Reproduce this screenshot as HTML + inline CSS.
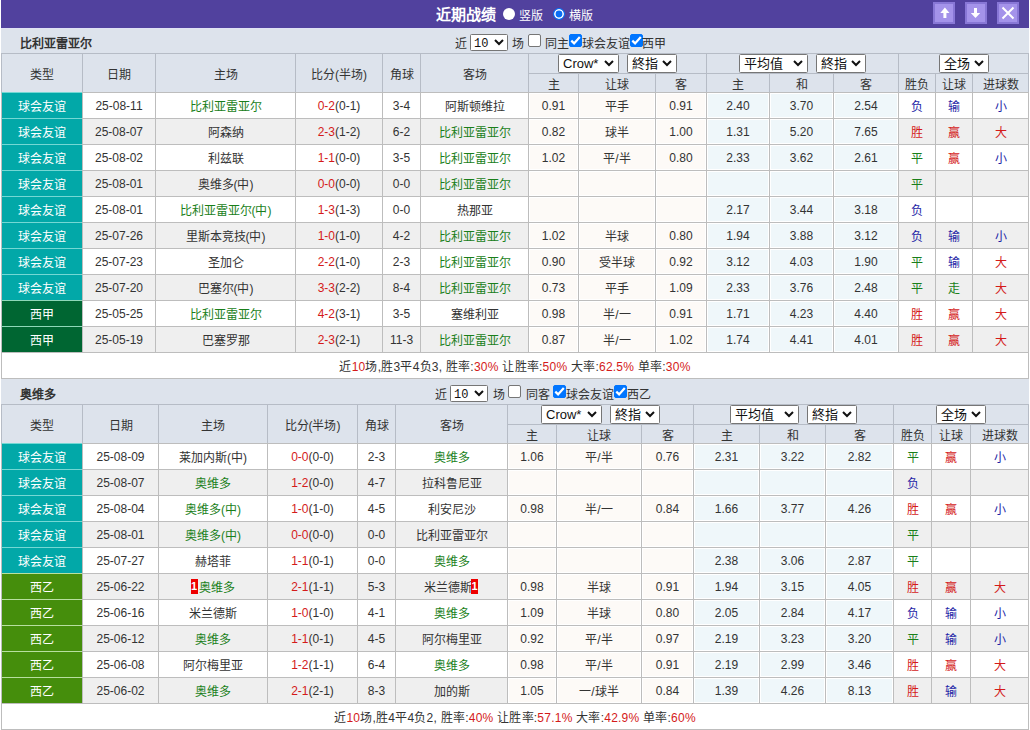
<!DOCTYPE html>
<html lang="zh-CN"><head><meta charset="utf-8"><title>近期战绩</title><style>
*{box-sizing:border-box}
html,body{margin:0;padding:0}
body{width:1030px;height:730px;overflow:hidden;background:#fff;position:relative;font-family:"Liberation Sans",sans-serif;font-size:12px;color:#333}
.c{position:absolute;border:1px solid #bdbdbd;text-align:center;white-space:nowrap;overflow:hidden}
.ty{color:#fff;font-size:12px}
.title{position:absolute;left:1px;top:0;width:1028px;height:28px;background:#51419e}
.bar{position:absolute;left:1px;width:1028px;background:#dde3ec}
.tn{position:absolute;left:19px;top:6px;font-size:12px;color:#333}
.ct{position:absolute;white-space:nowrap;font-size:12px;line-height:16px}
.sm{justify-content:flex-start;padding:0 0 0 5px}
.sm .chev{position:absolute;left:23px;top:4px}
.sm .st{position:relative;top:1px;left:-2px}
.sel{display:inline-flex;align-items:center;justify-content:space-between;vertical-align:middle;background:#fff;border:1px solid #767676;border-radius:1.5px;padding:0 4px 0 4px;color:#111;line-height:1}
.chev{flex:none}
.cb{display:inline-block;width:13px;height:13px;border:1px solid #767676;border-radius:2px;background:#fff;vertical-align:middle;position:relative}
.cb.on{background:#0075ff;border-color:#0075ff}
.cb svg{position:absolute;left:-1px;top:-1px}
.rc{display:inline-block;position:relative;top:-2px;left:-1px;background:#e00;color:#fff;font-weight:bold;font-size:11px;width:7px;height:15px;line-height:15px;text-align:center;vertical-align:middle;overflow:hidden}
.btn{position:absolute;top:2px;width:22px;height:22px;background:#a493ea;border:2px solid #8877d6}
</style></head>
<body>
<div class="title">
<b style="position:absolute;left:435px;top:3px;font-size:15px;color:#fff">近期战绩</b>
<span style="position:absolute;left:502px;top:8px;width:12px;height:12px;border-radius:50%;background:#fff"></span>
<span style="position:absolute;left:518px;top:6px;font-size:12px;color:#fff">竖版</span>
<span style="position:absolute;left:552px;top:8px;width:12px;height:12px;border-radius:50%;background:#0a6ff5;border:1.5px solid #0a6ff5;box-shadow:inset 0 0 0 1.6px #fff"></span>
<span style="position:absolute;left:568px;top:6px;font-size:12px;color:#fff">横版</span>
<span class="btn" style="left:932px"><svg width="18" height="18" viewBox="0 0 18 18" style="position:absolute;left:0;top:0"><path d="M9.9 3.6 L14.5 9.1 L11.4 9.1 L11.4 14 L8.4 14 L8.4 9.1 L5.3 9.1 Z" fill="#fff"/></svg></span>
<span class="btn" style="left:964px"><svg width="18" height="18" viewBox="0 0 18 18" style="position:absolute;left:0;top:0"><path d="M8.5 14 L13.2 9.1 L10 9.1 L10 3.9 L7 3.9 L7 9.1 L3.8 9.1 Z" fill="#fff"/></svg></span>
<span class="btn" style="left:996px"><svg width="18" height="18" viewBox="0 0 18 18" style="position:absolute;left:0;top:0"><path d="M3.5 3.5 L14.5 14.5 M14.5 3.5 L3.5 14.5" stroke="#fff" stroke-width="2"/></svg></span>
</div>
<div class="bar" style="top:28px;height:25px;border-top:1px solid #e0e2f5"><b class="tn" style="top:5px">比利亚雷亚尔</b></div><span class="ct" style="left:455px;top:36px">近</span><span class="sel sm" style="position:absolute;left:470px;top:34px;width:38px;height:17px"><span class="st" style="font-family:'Liberation Mono',monospace;font-size:12px;margin-left:1px">10</span><svg class="chev" width="10" height="7" viewBox="0 0 10 7"><polyline points="1,1 5,5 9,1" fill="none" stroke="#111" stroke-width="2"/></svg></span><span class="ct" style="left:512px;top:36px">场</span><span class="cb" style="position:absolute;left:528px;top:34px"></span><span class="ct" style="left:545px;top:36px">同主</span><span class="cb on" style="position:absolute;left:569px;top:34px"><svg width="13" height="13" viewBox="0 0 13 13"><polyline points="2.3,6.6 5.1,9.4 10.8,3" fill="none" stroke="#fff" stroke-width="2.2"/></svg></span><span class="ct" style="left:582px;top:36px">球会友谊</span><span class="cb on" style="position:absolute;left:630px;top:34px"><svg width="13" height="13" viewBox="0 0 13 13"><polyline points="2.3,6.6 5.1,9.4 10.8,3" fill="none" stroke="#fff" stroke-width="2.2"/></svg></span><span class="ct" style="left:642px;top:36px">西甲</span><div class="c" style="left:1px;top:53px;width:82px;height:40px;line-height:38px;padding-top:2px;background:#dde3ec;border-color:#b6bcc6;">类型</div><div class="c" style="left:82px;top:53px;width:74px;height:40px;line-height:38px;padding-top:2px;background:#dde3ec;border-color:#b6bcc6;">日期</div><div class="c" style="left:155px;top:53px;width:141px;height:40px;line-height:38px;padding-top:2px;background:#dde3ec;border-color:#b6bcc6;">主场</div><div class="c" style="left:295px;top:53px;width:88px;height:40px;line-height:38px;padding-top:2px;background:#dde3ec;border-color:#b6bcc6;">比分(半场)</div><div class="c" style="left:382px;top:53px;width:39px;height:40px;line-height:38px;padding-top:2px;background:#dde3ec;border-color:#b6bcc6;">角球</div><div class="c" style="left:420px;top:53px;width:109px;height:40px;line-height:38px;padding-top:2px;background:#dde3ec;border-color:#b6bcc6;">客场</div><div class="c" style="left:528px;top:53px;width:179px;height:21px;line-height:19px;padding-top:0px;background:#dde3ec;border-color:#b6bcc6;"><span class="sel" style="width:61px;height:19px;font-size:13px"><span class="st">Crow*</span><svg class="chev" width="10" height="7" viewBox="0 0 10 7"><polyline points="1,1 5,5 9,1" fill="none" stroke="#111" stroke-width="2"/></svg></span><span style="display:inline-block;width:8px"></span><span class="sel" style="width:50px;height:19px;font-size:13px"><span class="st">終指</span><svg class="chev" width="10" height="7" viewBox="0 0 10 7"><polyline points="1,1 5,5 9,1" fill="none" stroke="#111" stroke-width="2"/></svg></span></div><div class="c" style="left:706px;top:53px;width:193px;height:21px;line-height:19px;padding-top:0px;background:#dde3ec;border-color:#b6bcc6;"><span class="sel" style="width:69px;height:19px;font-size:13px"><span class="st">平均值</span><svg class="chev" width="10" height="7" viewBox="0 0 10 7"><polyline points="1,1 5,5 9,1" fill="none" stroke="#111" stroke-width="2"/></svg></span><span style="display:inline-block;width:8px"></span><span class="sel" style="width:50px;height:19px;font-size:13px"><span class="st">終指</span><svg class="chev" width="10" height="7" viewBox="0 0 10 7"><polyline points="1,1 5,5 9,1" fill="none" stroke="#111" stroke-width="2"/></svg></span></div><div class="c" style="left:898px;top:53px;width:131px;height:21px;line-height:19px;padding-top:0px;background:#dde3ec;border-color:#b6bcc6;"><span class="sel" style="width:50px;height:19px;font-size:13px"><span class="st">全场</span><svg class="chev" width="10" height="7" viewBox="0 0 10 7"><polyline points="1,1 5,5 9,1" fill="none" stroke="#111" stroke-width="2"/></svg></span></div><div class="c" style="left:528px;top:73px;width:51px;height:20px;line-height:18px;padding-top:2px;background:#dde3ec;border-color:#b6bcc6;">主</div><div class="c" style="left:578px;top:73px;width:78px;height:20px;line-height:18px;padding-top:2px;background:#dde3ec;border-color:#b6bcc6;">让球</div><div class="c" style="left:655px;top:73px;width:52px;height:20px;line-height:18px;padding-top:2px;background:#dde3ec;border-color:#b6bcc6;">客</div><div class="c" style="left:706px;top:73px;width:64px;height:20px;line-height:18px;padding-top:2px;background:#dde3ec;border-color:#b6bcc6;">主</div><div class="c" style="left:769px;top:73px;width:65px;height:20px;line-height:18px;padding-top:2px;background:#dde3ec;border-color:#b6bcc6;">和</div><div class="c" style="left:833px;top:73px;width:66px;height:20px;line-height:18px;padding-top:2px;background:#dde3ec;border-color:#b6bcc6;">客</div><div class="c" style="left:898px;top:73px;width:38px;height:20px;line-height:18px;padding-top:2px;background:#dde3ec;border-color:#b6bcc6;">胜负</div><div class="c" style="left:935px;top:73px;width:38px;height:20px;line-height:18px;padding-top:2px;background:#dde3ec;border-color:#b6bcc6;">让球</div><div class="c" style="left:972px;top:73px;width:57px;height:20px;line-height:18px;padding-top:2px;background:#dde3ec;border-color:#b6bcc6;">进球数</div><div class="c ty" style="left:1px;top:92px;width:82px;height:27px;line-height:25px;padding-top:2px;padding-right:2px;background:#02a8a8;border:0;border-left:1px solid #bdbdbd;border-top:1px solid #74d8d4;border-bottom:1px solid #74d8d4">球会友谊</div><div class="c" style="left:82px;top:92px;width:74px;height:27px;line-height:25px;padding-top:1px;background:#fff;">25-08-11</div><div class="c" style="left:155px;top:92px;width:141px;height:27px;line-height:25px;padding-top:2px;background:#fff;"><span style="color:#1a7f1a">比利亚雷亚尔</span></div><div class="c" style="left:295px;top:92px;width:88px;height:27px;line-height:25px;padding-top:1px;background:#fff;"><span style="color:#d41a1a">0-2</span>(0-1)</div><div class="c" style="left:382px;top:92px;width:39px;height:27px;line-height:25px;padding-top:1px;background:#fff;">3-4</div><div class="c" style="left:420px;top:92px;width:109px;height:27px;line-height:25px;padding-top:2px;background:#fff;"><span style="color:#333">阿斯顿维拉</span></div><div class="c" style="left:528px;top:92px;width:51px;height:27px;line-height:25px;padding-top:1px;background:#fdfaf7;box-shadow:inset 0 0 0 1px #fff;">0.91</div><div class="c" style="left:578px;top:92px;width:78px;height:27px;line-height:25px;padding-top:2px;background:#fdfaf7;box-shadow:inset 0 0 0 1px #fff;">平手</div><div class="c" style="left:655px;top:92px;width:52px;height:27px;line-height:25px;padding-top:1px;background:#fdfaf7;box-shadow:inset 0 0 0 1px #fff;">0.91</div><div class="c" style="left:706px;top:92px;width:64px;height:27px;line-height:25px;padding-top:1px;background:#eff7fa;box-shadow:inset 0 0 0 1px #fff;">2.40</div><div class="c" style="left:769px;top:92px;width:65px;height:27px;line-height:25px;padding-top:1px;background:#eff7fa;box-shadow:inset 0 0 0 1px #fff;">3.70</div><div class="c" style="left:833px;top:92px;width:66px;height:27px;line-height:25px;padding-top:1px;background:#eff7fa;box-shadow:inset 0 0 0 1px #fff;">2.54</div><div class="c" style="left:898px;top:92px;width:38px;height:27px;line-height:25px;padding-top:2px;background:#fff;"><span style="color:#1e1ea6">负</span></div><div class="c" style="left:935px;top:92px;width:38px;height:27px;line-height:25px;padding-top:2px;background:#fff;"><span style="color:#1e1ea6">输</span></div><div class="c" style="left:972px;top:92px;width:57px;height:27px;line-height:25px;padding-top:2px;background:#fff;"><span style="color:#1e1ea6">小</span></div><div class="c ty" style="left:1px;top:118px;width:82px;height:27px;line-height:25px;padding-top:2px;padding-right:2px;background:#02a8a8;border:0;border-left:1px solid #bdbdbd;border-top:1px solid #74d8d4;border-bottom:1px solid #74d8d4">球会友谊</div><div class="c" style="left:82px;top:118px;width:74px;height:27px;line-height:25px;padding-top:1px;background:#efefef;">25-08-07</div><div class="c" style="left:155px;top:118px;width:141px;height:27px;line-height:25px;padding-top:2px;background:#efefef;"><span style="color:#333">阿森纳</span></div><div class="c" style="left:295px;top:118px;width:88px;height:27px;line-height:25px;padding-top:1px;background:#efefef;"><span style="color:#d41a1a">2-3</span>(1-2)</div><div class="c" style="left:382px;top:118px;width:39px;height:27px;line-height:25px;padding-top:1px;background:#efefef;">6-2</div><div class="c" style="left:420px;top:118px;width:109px;height:27px;line-height:25px;padding-top:2px;background:#efefef;"><span style="color:#1a7f1a">比利亚雷亚尔</span></div><div class="c" style="left:528px;top:118px;width:51px;height:27px;line-height:25px;padding-top:1px;background:#fdfaf7;box-shadow:inset 0 0 0 1px #fff;">0.82</div><div class="c" style="left:578px;top:118px;width:78px;height:27px;line-height:25px;padding-top:2px;background:#fdfaf7;box-shadow:inset 0 0 0 1px #fff;">球半</div><div class="c" style="left:655px;top:118px;width:52px;height:27px;line-height:25px;padding-top:1px;background:#fdfaf7;box-shadow:inset 0 0 0 1px #fff;">1.00</div><div class="c" style="left:706px;top:118px;width:64px;height:27px;line-height:25px;padding-top:1px;background:#eff7fa;box-shadow:inset 0 0 0 1px #fff;">1.31</div><div class="c" style="left:769px;top:118px;width:65px;height:27px;line-height:25px;padding-top:1px;background:#eff7fa;box-shadow:inset 0 0 0 1px #fff;">5.20</div><div class="c" style="left:833px;top:118px;width:66px;height:27px;line-height:25px;padding-top:1px;background:#eff7fa;box-shadow:inset 0 0 0 1px #fff;">7.65</div><div class="c" style="left:898px;top:118px;width:38px;height:27px;line-height:25px;padding-top:2px;background:#efefef;"><span style="color:#d41a1a">胜</span></div><div class="c" style="left:935px;top:118px;width:38px;height:27px;line-height:25px;padding-top:2px;background:#efefef;"><span style="color:#d41a1a">赢</span></div><div class="c" style="left:972px;top:118px;width:57px;height:27px;line-height:25px;padding-top:2px;background:#efefef;"><span style="color:#d41a1a">大</span></div><div class="c ty" style="left:1px;top:144px;width:82px;height:27px;line-height:25px;padding-top:2px;padding-right:2px;background:#02a8a8;border:0;border-left:1px solid #bdbdbd;border-top:1px solid #74d8d4;border-bottom:1px solid #74d8d4">球会友谊</div><div class="c" style="left:82px;top:144px;width:74px;height:27px;line-height:25px;padding-top:1px;background:#fff;">25-08-02</div><div class="c" style="left:155px;top:144px;width:141px;height:27px;line-height:25px;padding-top:2px;background:#fff;"><span style="color:#333">利兹联</span></div><div class="c" style="left:295px;top:144px;width:88px;height:27px;line-height:25px;padding-top:1px;background:#fff;"><span style="color:#d41a1a">1-1</span>(0-0)</div><div class="c" style="left:382px;top:144px;width:39px;height:27px;line-height:25px;padding-top:1px;background:#fff;">3-5</div><div class="c" style="left:420px;top:144px;width:109px;height:27px;line-height:25px;padding-top:2px;background:#fff;"><span style="color:#1a7f1a">比利亚雷亚尔</span></div><div class="c" style="left:528px;top:144px;width:51px;height:27px;line-height:25px;padding-top:1px;background:#fdfaf7;box-shadow:inset 0 0 0 1px #fff;">1.02</div><div class="c" style="left:578px;top:144px;width:78px;height:27px;line-height:25px;padding-top:2px;background:#fdfaf7;box-shadow:inset 0 0 0 1px #fff;">平/半</div><div class="c" style="left:655px;top:144px;width:52px;height:27px;line-height:25px;padding-top:1px;background:#fdfaf7;box-shadow:inset 0 0 0 1px #fff;">0.80</div><div class="c" style="left:706px;top:144px;width:64px;height:27px;line-height:25px;padding-top:1px;background:#eff7fa;box-shadow:inset 0 0 0 1px #fff;">2.33</div><div class="c" style="left:769px;top:144px;width:65px;height:27px;line-height:25px;padding-top:1px;background:#eff7fa;box-shadow:inset 0 0 0 1px #fff;">3.62</div><div class="c" style="left:833px;top:144px;width:66px;height:27px;line-height:25px;padding-top:1px;background:#eff7fa;box-shadow:inset 0 0 0 1px #fff;">2.61</div><div class="c" style="left:898px;top:144px;width:38px;height:27px;line-height:25px;padding-top:2px;background:#fff;"><span style="color:#1a7f1a">平</span></div><div class="c" style="left:935px;top:144px;width:38px;height:27px;line-height:25px;padding-top:2px;background:#fff;"><span style="color:#d41a1a">赢</span></div><div class="c" style="left:972px;top:144px;width:57px;height:27px;line-height:25px;padding-top:2px;background:#fff;"><span style="color:#1e1ea6">小</span></div><div class="c ty" style="left:1px;top:170px;width:82px;height:27px;line-height:25px;padding-top:2px;padding-right:2px;background:#02a8a8;border:0;border-left:1px solid #bdbdbd;border-top:1px solid #74d8d4;border-bottom:1px solid #74d8d4">球会友谊</div><div class="c" style="left:82px;top:170px;width:74px;height:27px;line-height:25px;padding-top:1px;background:#efefef;">25-08-01</div><div class="c" style="left:155px;top:170px;width:141px;height:27px;line-height:25px;padding-top:2px;background:#efefef;"><span style="color:#333">奥维多(中)</span></div><div class="c" style="left:295px;top:170px;width:88px;height:27px;line-height:25px;padding-top:1px;background:#efefef;"><span style="color:#d41a1a">0-0</span>(0-0)</div><div class="c" style="left:382px;top:170px;width:39px;height:27px;line-height:25px;padding-top:1px;background:#efefef;">0-0</div><div class="c" style="left:420px;top:170px;width:109px;height:27px;line-height:25px;padding-top:2px;background:#efefef;"><span style="color:#1a7f1a">比利亚雷亚尔</span></div><div class="c" style="left:528px;top:170px;width:51px;height:27px;line-height:25px;padding-top:1px;background:#fdfaf7;box-shadow:inset 0 0 0 1px #fff;"></div><div class="c" style="left:578px;top:170px;width:78px;height:27px;line-height:25px;padding-top:1px;background:#fdfaf7;box-shadow:inset 0 0 0 1px #fff;"></div><div class="c" style="left:655px;top:170px;width:52px;height:27px;line-height:25px;padding-top:1px;background:#fdfaf7;box-shadow:inset 0 0 0 1px #fff;"></div><div class="c" style="left:706px;top:170px;width:64px;height:27px;line-height:25px;padding-top:1px;background:#eff7fa;box-shadow:inset 0 0 0 1px #fff;"></div><div class="c" style="left:769px;top:170px;width:65px;height:27px;line-height:25px;padding-top:1px;background:#eff7fa;box-shadow:inset 0 0 0 1px #fff;"></div><div class="c" style="left:833px;top:170px;width:66px;height:27px;line-height:25px;padding-top:1px;background:#eff7fa;box-shadow:inset 0 0 0 1px #fff;"></div><div class="c" style="left:898px;top:170px;width:38px;height:27px;line-height:25px;padding-top:2px;background:#efefef;"><span style="color:#1a7f1a">平</span></div><div class="c" style="left:935px;top:170px;width:38px;height:27px;line-height:25px;padding-top:1px;background:#efefef;"></div><div class="c" style="left:972px;top:170px;width:57px;height:27px;line-height:25px;padding-top:1px;background:#efefef;"></div><div class="c ty" style="left:1px;top:196px;width:82px;height:27px;line-height:25px;padding-top:2px;padding-right:2px;background:#02a8a8;border:0;border-left:1px solid #bdbdbd;border-top:1px solid #74d8d4;border-bottom:1px solid #74d8d4">球会友谊</div><div class="c" style="left:82px;top:196px;width:74px;height:27px;line-height:25px;padding-top:1px;background:#fff;">25-08-01</div><div class="c" style="left:155px;top:196px;width:141px;height:27px;line-height:25px;padding-top:2px;background:#fff;"><span style="color:#1a7f1a">比利亚雷亚尔(中)</span></div><div class="c" style="left:295px;top:196px;width:88px;height:27px;line-height:25px;padding-top:1px;background:#fff;"><span style="color:#d41a1a">1-3</span>(1-3)</div><div class="c" style="left:382px;top:196px;width:39px;height:27px;line-height:25px;padding-top:1px;background:#fff;">0-0</div><div class="c" style="left:420px;top:196px;width:109px;height:27px;line-height:25px;padding-top:2px;background:#fff;"><span style="color:#333">热那亚</span></div><div class="c" style="left:528px;top:196px;width:51px;height:27px;line-height:25px;padding-top:1px;background:#fdfaf7;box-shadow:inset 0 0 0 1px #fff;"></div><div class="c" style="left:578px;top:196px;width:78px;height:27px;line-height:25px;padding-top:1px;background:#fdfaf7;box-shadow:inset 0 0 0 1px #fff;"></div><div class="c" style="left:655px;top:196px;width:52px;height:27px;line-height:25px;padding-top:1px;background:#fdfaf7;box-shadow:inset 0 0 0 1px #fff;"></div><div class="c" style="left:706px;top:196px;width:64px;height:27px;line-height:25px;padding-top:1px;background:#eff7fa;box-shadow:inset 0 0 0 1px #fff;">2.17</div><div class="c" style="left:769px;top:196px;width:65px;height:27px;line-height:25px;padding-top:1px;background:#eff7fa;box-shadow:inset 0 0 0 1px #fff;">3.44</div><div class="c" style="left:833px;top:196px;width:66px;height:27px;line-height:25px;padding-top:1px;background:#eff7fa;box-shadow:inset 0 0 0 1px #fff;">3.18</div><div class="c" style="left:898px;top:196px;width:38px;height:27px;line-height:25px;padding-top:2px;background:#fff;"><span style="color:#1e1ea6">负</span></div><div class="c" style="left:935px;top:196px;width:38px;height:27px;line-height:25px;padding-top:1px;background:#fff;"></div><div class="c" style="left:972px;top:196px;width:57px;height:27px;line-height:25px;padding-top:1px;background:#fff;"></div><div class="c ty" style="left:1px;top:222px;width:82px;height:27px;line-height:25px;padding-top:2px;padding-right:2px;background:#02a8a8;border:0;border-left:1px solid #bdbdbd;border-top:1px solid #74d8d4;border-bottom:1px solid #74d8d4">球会友谊</div><div class="c" style="left:82px;top:222px;width:74px;height:27px;line-height:25px;padding-top:1px;background:#efefef;">25-07-26</div><div class="c" style="left:155px;top:222px;width:141px;height:27px;line-height:25px;padding-top:2px;background:#efefef;"><span style="color:#333">里斯本竞技(中)</span></div><div class="c" style="left:295px;top:222px;width:88px;height:27px;line-height:25px;padding-top:1px;background:#efefef;"><span style="color:#d41a1a">1-0</span>(1-0)</div><div class="c" style="left:382px;top:222px;width:39px;height:27px;line-height:25px;padding-top:1px;background:#efefef;">4-2</div><div class="c" style="left:420px;top:222px;width:109px;height:27px;line-height:25px;padding-top:2px;background:#efefef;"><span style="color:#1a7f1a">比利亚雷亚尔</span></div><div class="c" style="left:528px;top:222px;width:51px;height:27px;line-height:25px;padding-top:1px;background:#fdfaf7;box-shadow:inset 0 0 0 1px #fff;">1.02</div><div class="c" style="left:578px;top:222px;width:78px;height:27px;line-height:25px;padding-top:2px;background:#fdfaf7;box-shadow:inset 0 0 0 1px #fff;">半球</div><div class="c" style="left:655px;top:222px;width:52px;height:27px;line-height:25px;padding-top:1px;background:#fdfaf7;box-shadow:inset 0 0 0 1px #fff;">0.80</div><div class="c" style="left:706px;top:222px;width:64px;height:27px;line-height:25px;padding-top:1px;background:#eff7fa;box-shadow:inset 0 0 0 1px #fff;">1.94</div><div class="c" style="left:769px;top:222px;width:65px;height:27px;line-height:25px;padding-top:1px;background:#eff7fa;box-shadow:inset 0 0 0 1px #fff;">3.88</div><div class="c" style="left:833px;top:222px;width:66px;height:27px;line-height:25px;padding-top:1px;background:#eff7fa;box-shadow:inset 0 0 0 1px #fff;">3.12</div><div class="c" style="left:898px;top:222px;width:38px;height:27px;line-height:25px;padding-top:2px;background:#efefef;"><span style="color:#1e1ea6">负</span></div><div class="c" style="left:935px;top:222px;width:38px;height:27px;line-height:25px;padding-top:2px;background:#efefef;"><span style="color:#1e1ea6">输</span></div><div class="c" style="left:972px;top:222px;width:57px;height:27px;line-height:25px;padding-top:2px;background:#efefef;"><span style="color:#1e1ea6">小</span></div><div class="c ty" style="left:1px;top:248px;width:82px;height:27px;line-height:25px;padding-top:2px;padding-right:2px;background:#02a8a8;border:0;border-left:1px solid #bdbdbd;border-top:1px solid #74d8d4;border-bottom:1px solid #74d8d4">球会友谊</div><div class="c" style="left:82px;top:248px;width:74px;height:27px;line-height:25px;padding-top:1px;background:#fff;">25-07-23</div><div class="c" style="left:155px;top:248px;width:141px;height:27px;line-height:25px;padding-top:2px;background:#fff;"><span style="color:#333">圣加仑</span></div><div class="c" style="left:295px;top:248px;width:88px;height:27px;line-height:25px;padding-top:1px;background:#fff;"><span style="color:#d41a1a">2-2</span>(1-0)</div><div class="c" style="left:382px;top:248px;width:39px;height:27px;line-height:25px;padding-top:1px;background:#fff;">2-3</div><div class="c" style="left:420px;top:248px;width:109px;height:27px;line-height:25px;padding-top:2px;background:#fff;"><span style="color:#1a7f1a">比利亚雷亚尔</span></div><div class="c" style="left:528px;top:248px;width:51px;height:27px;line-height:25px;padding-top:1px;background:#fdfaf7;box-shadow:inset 0 0 0 1px #fff;">0.90</div><div class="c" style="left:578px;top:248px;width:78px;height:27px;line-height:25px;padding-top:2px;background:#fdfaf7;box-shadow:inset 0 0 0 1px #fff;">受半球</div><div class="c" style="left:655px;top:248px;width:52px;height:27px;line-height:25px;padding-top:1px;background:#fdfaf7;box-shadow:inset 0 0 0 1px #fff;">0.92</div><div class="c" style="left:706px;top:248px;width:64px;height:27px;line-height:25px;padding-top:1px;background:#eff7fa;box-shadow:inset 0 0 0 1px #fff;">3.12</div><div class="c" style="left:769px;top:248px;width:65px;height:27px;line-height:25px;padding-top:1px;background:#eff7fa;box-shadow:inset 0 0 0 1px #fff;">4.03</div><div class="c" style="left:833px;top:248px;width:66px;height:27px;line-height:25px;padding-top:1px;background:#eff7fa;box-shadow:inset 0 0 0 1px #fff;">1.90</div><div class="c" style="left:898px;top:248px;width:38px;height:27px;line-height:25px;padding-top:2px;background:#fff;"><span style="color:#1a7f1a">平</span></div><div class="c" style="left:935px;top:248px;width:38px;height:27px;line-height:25px;padding-top:2px;background:#fff;"><span style="color:#1e1ea6">输</span></div><div class="c" style="left:972px;top:248px;width:57px;height:27px;line-height:25px;padding-top:2px;background:#fff;"><span style="color:#d41a1a">大</span></div><div class="c ty" style="left:1px;top:274px;width:82px;height:27px;line-height:25px;padding-top:2px;padding-right:2px;background:#02a8a8;border:0;border-left:1px solid #bdbdbd;border-top:1px solid #74d8d4;border-bottom:1px solid #74d8d4">球会友谊</div><div class="c" style="left:82px;top:274px;width:74px;height:27px;line-height:25px;padding-top:1px;background:#efefef;">25-07-20</div><div class="c" style="left:155px;top:274px;width:141px;height:27px;line-height:25px;padding-top:2px;background:#efefef;"><span style="color:#333">巴塞尔(中)</span></div><div class="c" style="left:295px;top:274px;width:88px;height:27px;line-height:25px;padding-top:1px;background:#efefef;"><span style="color:#d41a1a">3-3</span>(2-2)</div><div class="c" style="left:382px;top:274px;width:39px;height:27px;line-height:25px;padding-top:1px;background:#efefef;">8-4</div><div class="c" style="left:420px;top:274px;width:109px;height:27px;line-height:25px;padding-top:2px;background:#efefef;"><span style="color:#1a7f1a">比利亚雷亚尔</span></div><div class="c" style="left:528px;top:274px;width:51px;height:27px;line-height:25px;padding-top:1px;background:#fdfaf7;box-shadow:inset 0 0 0 1px #fff;">0.73</div><div class="c" style="left:578px;top:274px;width:78px;height:27px;line-height:25px;padding-top:2px;background:#fdfaf7;box-shadow:inset 0 0 0 1px #fff;">平手</div><div class="c" style="left:655px;top:274px;width:52px;height:27px;line-height:25px;padding-top:1px;background:#fdfaf7;box-shadow:inset 0 0 0 1px #fff;">1.09</div><div class="c" style="left:706px;top:274px;width:64px;height:27px;line-height:25px;padding-top:1px;background:#eff7fa;box-shadow:inset 0 0 0 1px #fff;">2.33</div><div class="c" style="left:769px;top:274px;width:65px;height:27px;line-height:25px;padding-top:1px;background:#eff7fa;box-shadow:inset 0 0 0 1px #fff;">3.76</div><div class="c" style="left:833px;top:274px;width:66px;height:27px;line-height:25px;padding-top:1px;background:#eff7fa;box-shadow:inset 0 0 0 1px #fff;">2.48</div><div class="c" style="left:898px;top:274px;width:38px;height:27px;line-height:25px;padding-top:2px;background:#efefef;"><span style="color:#1a7f1a">平</span></div><div class="c" style="left:935px;top:274px;width:38px;height:27px;line-height:25px;padding-top:2px;background:#efefef;"><span style="color:#1a7f1a">走</span></div><div class="c" style="left:972px;top:274px;width:57px;height:27px;line-height:25px;padding-top:2px;background:#efefef;"><span style="color:#d41a1a">大</span></div><div class="c ty" style="left:1px;top:300px;width:82px;height:27px;line-height:25px;padding-top:2px;padding-right:2px;background:#006632;border:0;border-left:1px solid #bdbdbd;border-top:1px solid #8fd8b8;border-bottom:1px solid #8fd8b8">西甲</div><div class="c" style="left:82px;top:300px;width:74px;height:27px;line-height:25px;padding-top:1px;background:#fff;">25-05-25</div><div class="c" style="left:155px;top:300px;width:141px;height:27px;line-height:25px;padding-top:2px;background:#fff;"><span style="color:#1a7f1a">比利亚雷亚尔</span></div><div class="c" style="left:295px;top:300px;width:88px;height:27px;line-height:25px;padding-top:1px;background:#fff;"><span style="color:#d41a1a">4-2</span>(3-1)</div><div class="c" style="left:382px;top:300px;width:39px;height:27px;line-height:25px;padding-top:1px;background:#fff;">3-5</div><div class="c" style="left:420px;top:300px;width:109px;height:27px;line-height:25px;padding-top:2px;background:#fff;"><span style="color:#333">塞维利亚</span></div><div class="c" style="left:528px;top:300px;width:51px;height:27px;line-height:25px;padding-top:1px;background:#fdfaf7;box-shadow:inset 0 0 0 1px #fff;">0.98</div><div class="c" style="left:578px;top:300px;width:78px;height:27px;line-height:25px;padding-top:2px;background:#fdfaf7;box-shadow:inset 0 0 0 1px #fff;">半/一</div><div class="c" style="left:655px;top:300px;width:52px;height:27px;line-height:25px;padding-top:1px;background:#fdfaf7;box-shadow:inset 0 0 0 1px #fff;">0.91</div><div class="c" style="left:706px;top:300px;width:64px;height:27px;line-height:25px;padding-top:1px;background:#eff7fa;box-shadow:inset 0 0 0 1px #fff;">1.71</div><div class="c" style="left:769px;top:300px;width:65px;height:27px;line-height:25px;padding-top:1px;background:#eff7fa;box-shadow:inset 0 0 0 1px #fff;">4.23</div><div class="c" style="left:833px;top:300px;width:66px;height:27px;line-height:25px;padding-top:1px;background:#eff7fa;box-shadow:inset 0 0 0 1px #fff;">4.40</div><div class="c" style="left:898px;top:300px;width:38px;height:27px;line-height:25px;padding-top:2px;background:#fff;"><span style="color:#d41a1a">胜</span></div><div class="c" style="left:935px;top:300px;width:38px;height:27px;line-height:25px;padding-top:2px;background:#fff;"><span style="color:#d41a1a">赢</span></div><div class="c" style="left:972px;top:300px;width:57px;height:27px;line-height:25px;padding-top:2px;background:#fff;"><span style="color:#d41a1a">大</span></div><div class="c ty" style="left:1px;top:326px;width:82px;height:27px;line-height:25px;padding-top:2px;padding-right:2px;background:#006632;border:0;border-left:1px solid #bdbdbd;border-top:1px solid #8fd8b8;border-bottom:1px solid #8fd8b8">西甲</div><div class="c" style="left:82px;top:326px;width:74px;height:27px;line-height:25px;padding-top:1px;background:#efefef;">25-05-19</div><div class="c" style="left:155px;top:326px;width:141px;height:27px;line-height:25px;padding-top:2px;background:#efefef;"><span style="color:#333">巴塞罗那</span></div><div class="c" style="left:295px;top:326px;width:88px;height:27px;line-height:25px;padding-top:1px;background:#efefef;"><span style="color:#d41a1a">2-3</span>(2-1)</div><div class="c" style="left:382px;top:326px;width:39px;height:27px;line-height:25px;padding-top:1px;background:#efefef;">11-3</div><div class="c" style="left:420px;top:326px;width:109px;height:27px;line-height:25px;padding-top:2px;background:#efefef;"><span style="color:#1a7f1a">比利亚雷亚尔</span></div><div class="c" style="left:528px;top:326px;width:51px;height:27px;line-height:25px;padding-top:1px;background:#fdfaf7;box-shadow:inset 0 0 0 1px #fff;">0.87</div><div class="c" style="left:578px;top:326px;width:78px;height:27px;line-height:25px;padding-top:2px;background:#fdfaf7;box-shadow:inset 0 0 0 1px #fff;">半/一</div><div class="c" style="left:655px;top:326px;width:52px;height:27px;line-height:25px;padding-top:1px;background:#fdfaf7;box-shadow:inset 0 0 0 1px #fff;">1.02</div><div class="c" style="left:706px;top:326px;width:64px;height:27px;line-height:25px;padding-top:1px;background:#eff7fa;box-shadow:inset 0 0 0 1px #fff;">1.74</div><div class="c" style="left:769px;top:326px;width:65px;height:27px;line-height:25px;padding-top:1px;background:#eff7fa;box-shadow:inset 0 0 0 1px #fff;">4.41</div><div class="c" style="left:833px;top:326px;width:66px;height:27px;line-height:25px;padding-top:1px;background:#eff7fa;box-shadow:inset 0 0 0 1px #fff;">4.01</div><div class="c" style="left:898px;top:326px;width:38px;height:27px;line-height:25px;padding-top:2px;background:#efefef;"><span style="color:#d41a1a">胜</span></div><div class="c" style="left:935px;top:326px;width:38px;height:27px;line-height:25px;padding-top:2px;background:#efefef;"><span style="color:#d41a1a">赢</span></div><div class="c" style="left:972px;top:326px;width:57px;height:27px;line-height:25px;padding-top:2px;background:#efefef;"><span style="color:#d41a1a">大</span></div><div class="c" style="left:1px;top:352px;width:1028px;height:27px;line-height:25px;padding-top:2px;background:#fff;letter-spacing:0.24px">近<span style="color:#d41a1a">10</span>场,胜3平4负3, 胜率:<span style="color:#d41a1a">30%</span> 让胜率:<span style="color:#d41a1a">50%</span> 大率:<span style="color:#d41a1a">62.5%</span> 单率:<span style="color:#d41a1a">30%</span></div><div class="bar" style="top:379px;height:25px"><b class="tn" style="top:6px">奥维多</b></div><span class="ct" style="left:435px;top:387px">近</span><span class="sel sm" style="position:absolute;left:450px;top:385px;width:38px;height:17px"><span class="st" style="font-family:'Liberation Mono',monospace;font-size:12px;margin-left:1px">10</span><svg class="chev" width="10" height="7" viewBox="0 0 10 7"><polyline points="1,1 5,5 9,1" fill="none" stroke="#111" stroke-width="2"/></svg></span><span class="ct" style="left:493px;top:387px">场</span><span class="cb" style="position:absolute;left:508px;top:385px"></span><span class="ct" style="left:526px;top:387px">同客</span><span class="cb on" style="position:absolute;left:553px;top:385px"><svg width="13" height="13" viewBox="0 0 13 13"><polyline points="2.3,6.6 5.1,9.4 10.8,3" fill="none" stroke="#fff" stroke-width="2.2"/></svg></span><span class="ct" style="left:566px;top:387px">球会友谊</span><span class="cb on" style="position:absolute;left:614px;top:385px"><svg width="13" height="13" viewBox="0 0 13 13"><polyline points="2.3,6.6 5.1,9.4 10.8,3" fill="none" stroke="#fff" stroke-width="2.2"/></svg></span><span class="ct" style="left:627px;top:387px">西乙</span><div class="c" style="left:1px;top:404px;width:82px;height:40px;line-height:38px;padding-top:2px;background:#dde3ec;border-color:#b6bcc6;">类型</div><div class="c" style="left:82px;top:404px;width:77px;height:40px;line-height:38px;padding-top:2px;background:#dde3ec;border-color:#b6bcc6;">日期</div><div class="c" style="left:158px;top:404px;width:110px;height:40px;line-height:38px;padding-top:2px;background:#dde3ec;border-color:#b6bcc6;">主场</div><div class="c" style="left:267px;top:404px;width:91px;height:40px;line-height:38px;padding-top:2px;background:#dde3ec;border-color:#b6bcc6;">比分(半场)</div><div class="c" style="left:357px;top:404px;width:39px;height:40px;line-height:38px;padding-top:2px;background:#dde3ec;border-color:#b6bcc6;">角球</div><div class="c" style="left:395px;top:404px;width:113px;height:40px;line-height:38px;padding-top:2px;background:#dde3ec;border-color:#b6bcc6;">客场</div><div class="c" style="left:507px;top:404px;width:187px;height:21px;line-height:19px;padding-top:0px;background:#dde3ec;border-color:#b6bcc6;"><span class="sel" style="width:61px;height:19px;font-size:13px"><span class="st">Crow*</span><svg class="chev" width="10" height="7" viewBox="0 0 10 7"><polyline points="1,1 5,5 9,1" fill="none" stroke="#111" stroke-width="2"/></svg></span><span style="display:inline-block;width:8px"></span><span class="sel" style="width:50px;height:19px;font-size:13px"><span class="st">終指</span><svg class="chev" width="10" height="7" viewBox="0 0 10 7"><polyline points="1,1 5,5 9,1" fill="none" stroke="#111" stroke-width="2"/></svg></span></div><div class="c" style="left:693px;top:404px;width:201px;height:21px;line-height:19px;padding-top:0px;background:#dde3ec;border-color:#b6bcc6;"><span class="sel" style="width:69px;height:19px;font-size:13px"><span class="st">平均值</span><svg class="chev" width="10" height="7" viewBox="0 0 10 7"><polyline points="1,1 5,5 9,1" fill="none" stroke="#111" stroke-width="2"/></svg></span><span style="display:inline-block;width:8px"></span><span class="sel" style="width:50px;height:19px;font-size:13px"><span class="st">終指</span><svg class="chev" width="10" height="7" viewBox="0 0 10 7"><polyline points="1,1 5,5 9,1" fill="none" stroke="#111" stroke-width="2"/></svg></span></div><div class="c" style="left:893px;top:404px;width:136px;height:21px;line-height:19px;padding-top:0px;background:#dde3ec;border-color:#b6bcc6;"><span class="sel" style="width:50px;height:19px;font-size:13px"><span class="st">全场</span><svg class="chev" width="10" height="7" viewBox="0 0 10 7"><polyline points="1,1 5,5 9,1" fill="none" stroke="#111" stroke-width="2"/></svg></span></div><div class="c" style="left:507px;top:424px;width:50px;height:20px;line-height:18px;padding-top:2px;background:#dde3ec;border-color:#b6bcc6;">主</div><div class="c" style="left:556px;top:424px;width:86px;height:20px;line-height:18px;padding-top:2px;background:#dde3ec;border-color:#b6bcc6;">让球</div><div class="c" style="left:641px;top:424px;width:53px;height:20px;line-height:18px;padding-top:2px;background:#dde3ec;border-color:#b6bcc6;">客</div><div class="c" style="left:693px;top:424px;width:67px;height:20px;line-height:18px;padding-top:2px;background:#dde3ec;border-color:#b6bcc6;">主</div><div class="c" style="left:759px;top:424px;width:67px;height:20px;line-height:18px;padding-top:2px;background:#dde3ec;border-color:#b6bcc6;">和</div><div class="c" style="left:825px;top:424px;width:69px;height:20px;line-height:18px;padding-top:2px;background:#dde3ec;border-color:#b6bcc6;">客</div><div class="c" style="left:893px;top:424px;width:39px;height:20px;line-height:18px;padding-top:2px;background:#dde3ec;border-color:#b6bcc6;">胜负</div><div class="c" style="left:931px;top:424px;width:40px;height:20px;line-height:18px;padding-top:2px;background:#dde3ec;border-color:#b6bcc6;">让球</div><div class="c" style="left:970px;top:424px;width:59px;height:20px;line-height:18px;padding-top:2px;background:#dde3ec;border-color:#b6bcc6;">进球数</div><div class="c ty" style="left:1px;top:443px;width:82px;height:27px;line-height:25px;padding-top:2px;padding-right:2px;background:#02a8a8;border:0;border-left:1px solid #bdbdbd;border-top:1px solid #74d8d4;border-bottom:1px solid #74d8d4">球会友谊</div><div class="c" style="left:82px;top:443px;width:77px;height:27px;line-height:25px;padding-top:1px;background:#fff;">25-08-09</div><div class="c" style="left:158px;top:443px;width:110px;height:27px;line-height:25px;padding-top:2px;background:#fff;"><span style="color:#333">莱加内斯(中)</span></div><div class="c" style="left:267px;top:443px;width:91px;height:27px;line-height:25px;padding-top:1px;background:#fff;"><span style="color:#d41a1a">0-0</span>(0-0)</div><div class="c" style="left:357px;top:443px;width:39px;height:27px;line-height:25px;padding-top:1px;background:#fff;">2-3</div><div class="c" style="left:395px;top:443px;width:113px;height:27px;line-height:25px;padding-top:2px;background:#fff;"><span style="color:#1a7f1a">奥维多</span></div><div class="c" style="left:507px;top:443px;width:50px;height:27px;line-height:25px;padding-top:1px;background:#fdfaf7;box-shadow:inset 0 0 0 1px #fff;">1.06</div><div class="c" style="left:556px;top:443px;width:86px;height:27px;line-height:25px;padding-top:2px;background:#fdfaf7;box-shadow:inset 0 0 0 1px #fff;">平/半</div><div class="c" style="left:641px;top:443px;width:53px;height:27px;line-height:25px;padding-top:1px;background:#fdfaf7;box-shadow:inset 0 0 0 1px #fff;">0.76</div><div class="c" style="left:693px;top:443px;width:67px;height:27px;line-height:25px;padding-top:1px;background:#eff7fa;box-shadow:inset 0 0 0 1px #fff;">2.31</div><div class="c" style="left:759px;top:443px;width:67px;height:27px;line-height:25px;padding-top:1px;background:#eff7fa;box-shadow:inset 0 0 0 1px #fff;">3.22</div><div class="c" style="left:825px;top:443px;width:69px;height:27px;line-height:25px;padding-top:1px;background:#eff7fa;box-shadow:inset 0 0 0 1px #fff;">2.82</div><div class="c" style="left:893px;top:443px;width:39px;height:27px;line-height:25px;padding-top:2px;background:#fff;"><span style="color:#1a7f1a">平</span></div><div class="c" style="left:931px;top:443px;width:40px;height:27px;line-height:25px;padding-top:2px;background:#fff;"><span style="color:#d41a1a">赢</span></div><div class="c" style="left:970px;top:443px;width:59px;height:27px;line-height:25px;padding-top:2px;background:#fff;"><span style="color:#1e1ea6">小</span></div><div class="c ty" style="left:1px;top:469px;width:82px;height:27px;line-height:25px;padding-top:2px;padding-right:2px;background:#02a8a8;border:0;border-left:1px solid #bdbdbd;border-top:1px solid #74d8d4;border-bottom:1px solid #74d8d4">球会友谊</div><div class="c" style="left:82px;top:469px;width:77px;height:27px;line-height:25px;padding-top:1px;background:#efefef;">25-08-07</div><div class="c" style="left:158px;top:469px;width:110px;height:27px;line-height:25px;padding-top:2px;background:#efefef;"><span style="color:#1a7f1a">奥维多</span></div><div class="c" style="left:267px;top:469px;width:91px;height:27px;line-height:25px;padding-top:1px;background:#efefef;"><span style="color:#d41a1a">1-2</span>(0-0)</div><div class="c" style="left:357px;top:469px;width:39px;height:27px;line-height:25px;padding-top:1px;background:#efefef;">4-7</div><div class="c" style="left:395px;top:469px;width:113px;height:27px;line-height:25px;padding-top:2px;background:#efefef;"><span style="color:#333">拉科鲁尼亚</span></div><div class="c" style="left:507px;top:469px;width:50px;height:27px;line-height:25px;padding-top:1px;background:#fdfaf7;box-shadow:inset 0 0 0 1px #fff;"></div><div class="c" style="left:556px;top:469px;width:86px;height:27px;line-height:25px;padding-top:1px;background:#fdfaf7;box-shadow:inset 0 0 0 1px #fff;"></div><div class="c" style="left:641px;top:469px;width:53px;height:27px;line-height:25px;padding-top:1px;background:#fdfaf7;box-shadow:inset 0 0 0 1px #fff;"></div><div class="c" style="left:693px;top:469px;width:67px;height:27px;line-height:25px;padding-top:1px;background:#eff7fa;box-shadow:inset 0 0 0 1px #fff;"></div><div class="c" style="left:759px;top:469px;width:67px;height:27px;line-height:25px;padding-top:1px;background:#eff7fa;box-shadow:inset 0 0 0 1px #fff;"></div><div class="c" style="left:825px;top:469px;width:69px;height:27px;line-height:25px;padding-top:1px;background:#eff7fa;box-shadow:inset 0 0 0 1px #fff;"></div><div class="c" style="left:893px;top:469px;width:39px;height:27px;line-height:25px;padding-top:2px;background:#efefef;"><span style="color:#1e1ea6">负</span></div><div class="c" style="left:931px;top:469px;width:40px;height:27px;line-height:25px;padding-top:1px;background:#efefef;"></div><div class="c" style="left:970px;top:469px;width:59px;height:27px;line-height:25px;padding-top:1px;background:#efefef;"></div><div class="c ty" style="left:1px;top:495px;width:82px;height:27px;line-height:25px;padding-top:2px;padding-right:2px;background:#02a8a8;border:0;border-left:1px solid #bdbdbd;border-top:1px solid #74d8d4;border-bottom:1px solid #74d8d4">球会友谊</div><div class="c" style="left:82px;top:495px;width:77px;height:27px;line-height:25px;padding-top:1px;background:#fff;">25-08-04</div><div class="c" style="left:158px;top:495px;width:110px;height:27px;line-height:25px;padding-top:2px;background:#fff;"><span style="color:#1a7f1a">奥维多(中)</span></div><div class="c" style="left:267px;top:495px;width:91px;height:27px;line-height:25px;padding-top:1px;background:#fff;"><span style="color:#d41a1a">1-0</span>(1-0)</div><div class="c" style="left:357px;top:495px;width:39px;height:27px;line-height:25px;padding-top:1px;background:#fff;">4-5</div><div class="c" style="left:395px;top:495px;width:113px;height:27px;line-height:25px;padding-top:2px;background:#fff;"><span style="color:#333">利安尼沙</span></div><div class="c" style="left:507px;top:495px;width:50px;height:27px;line-height:25px;padding-top:1px;background:#fdfaf7;box-shadow:inset 0 0 0 1px #fff;">0.98</div><div class="c" style="left:556px;top:495px;width:86px;height:27px;line-height:25px;padding-top:2px;background:#fdfaf7;box-shadow:inset 0 0 0 1px #fff;">半/一</div><div class="c" style="left:641px;top:495px;width:53px;height:27px;line-height:25px;padding-top:1px;background:#fdfaf7;box-shadow:inset 0 0 0 1px #fff;">0.84</div><div class="c" style="left:693px;top:495px;width:67px;height:27px;line-height:25px;padding-top:1px;background:#eff7fa;box-shadow:inset 0 0 0 1px #fff;">1.66</div><div class="c" style="left:759px;top:495px;width:67px;height:27px;line-height:25px;padding-top:1px;background:#eff7fa;box-shadow:inset 0 0 0 1px #fff;">3.77</div><div class="c" style="left:825px;top:495px;width:69px;height:27px;line-height:25px;padding-top:1px;background:#eff7fa;box-shadow:inset 0 0 0 1px #fff;">4.26</div><div class="c" style="left:893px;top:495px;width:39px;height:27px;line-height:25px;padding-top:2px;background:#fff;"><span style="color:#d41a1a">胜</span></div><div class="c" style="left:931px;top:495px;width:40px;height:27px;line-height:25px;padding-top:2px;background:#fff;"><span style="color:#d41a1a">赢</span></div><div class="c" style="left:970px;top:495px;width:59px;height:27px;line-height:25px;padding-top:2px;background:#fff;"><span style="color:#1e1ea6">小</span></div><div class="c ty" style="left:1px;top:521px;width:82px;height:27px;line-height:25px;padding-top:2px;padding-right:2px;background:#02a8a8;border:0;border-left:1px solid #bdbdbd;border-top:1px solid #74d8d4;border-bottom:1px solid #74d8d4">球会友谊</div><div class="c" style="left:82px;top:521px;width:77px;height:27px;line-height:25px;padding-top:1px;background:#efefef;">25-08-01</div><div class="c" style="left:158px;top:521px;width:110px;height:27px;line-height:25px;padding-top:2px;background:#efefef;"><span style="color:#1a7f1a">奥维多(中)</span></div><div class="c" style="left:267px;top:521px;width:91px;height:27px;line-height:25px;padding-top:1px;background:#efefef;"><span style="color:#d41a1a">0-0</span>(0-0)</div><div class="c" style="left:357px;top:521px;width:39px;height:27px;line-height:25px;padding-top:1px;background:#efefef;">0-0</div><div class="c" style="left:395px;top:521px;width:113px;height:27px;line-height:25px;padding-top:2px;background:#efefef;"><span style="color:#333">比利亚雷亚尔</span></div><div class="c" style="left:507px;top:521px;width:50px;height:27px;line-height:25px;padding-top:1px;background:#fdfaf7;box-shadow:inset 0 0 0 1px #fff;"></div><div class="c" style="left:556px;top:521px;width:86px;height:27px;line-height:25px;padding-top:1px;background:#fdfaf7;box-shadow:inset 0 0 0 1px #fff;"></div><div class="c" style="left:641px;top:521px;width:53px;height:27px;line-height:25px;padding-top:1px;background:#fdfaf7;box-shadow:inset 0 0 0 1px #fff;"></div><div class="c" style="left:693px;top:521px;width:67px;height:27px;line-height:25px;padding-top:1px;background:#eff7fa;box-shadow:inset 0 0 0 1px #fff;"></div><div class="c" style="left:759px;top:521px;width:67px;height:27px;line-height:25px;padding-top:1px;background:#eff7fa;box-shadow:inset 0 0 0 1px #fff;"></div><div class="c" style="left:825px;top:521px;width:69px;height:27px;line-height:25px;padding-top:1px;background:#eff7fa;box-shadow:inset 0 0 0 1px #fff;"></div><div class="c" style="left:893px;top:521px;width:39px;height:27px;line-height:25px;padding-top:2px;background:#efefef;"><span style="color:#1a7f1a">平</span></div><div class="c" style="left:931px;top:521px;width:40px;height:27px;line-height:25px;padding-top:1px;background:#efefef;"></div><div class="c" style="left:970px;top:521px;width:59px;height:27px;line-height:25px;padding-top:1px;background:#efefef;"></div><div class="c ty" style="left:1px;top:547px;width:82px;height:27px;line-height:25px;padding-top:2px;padding-right:2px;background:#02a8a8;border:0;border-left:1px solid #bdbdbd;border-top:1px solid #74d8d4;border-bottom:1px solid #74d8d4">球会友谊</div><div class="c" style="left:82px;top:547px;width:77px;height:27px;line-height:25px;padding-top:1px;background:#fff;">25-07-27</div><div class="c" style="left:158px;top:547px;width:110px;height:27px;line-height:25px;padding-top:2px;background:#fff;"><span style="color:#333">赫塔菲</span></div><div class="c" style="left:267px;top:547px;width:91px;height:27px;line-height:25px;padding-top:1px;background:#fff;"><span style="color:#d41a1a">1-1</span>(0-1)</div><div class="c" style="left:357px;top:547px;width:39px;height:27px;line-height:25px;padding-top:1px;background:#fff;">0-0</div><div class="c" style="left:395px;top:547px;width:113px;height:27px;line-height:25px;padding-top:2px;background:#fff;"><span style="color:#1a7f1a">奥维多</span></div><div class="c" style="left:507px;top:547px;width:50px;height:27px;line-height:25px;padding-top:1px;background:#fdfaf7;box-shadow:inset 0 0 0 1px #fff;"></div><div class="c" style="left:556px;top:547px;width:86px;height:27px;line-height:25px;padding-top:1px;background:#fdfaf7;box-shadow:inset 0 0 0 1px #fff;"></div><div class="c" style="left:641px;top:547px;width:53px;height:27px;line-height:25px;padding-top:1px;background:#fdfaf7;box-shadow:inset 0 0 0 1px #fff;"></div><div class="c" style="left:693px;top:547px;width:67px;height:27px;line-height:25px;padding-top:1px;background:#eff7fa;box-shadow:inset 0 0 0 1px #fff;">2.38</div><div class="c" style="left:759px;top:547px;width:67px;height:27px;line-height:25px;padding-top:1px;background:#eff7fa;box-shadow:inset 0 0 0 1px #fff;">3.06</div><div class="c" style="left:825px;top:547px;width:69px;height:27px;line-height:25px;padding-top:1px;background:#eff7fa;box-shadow:inset 0 0 0 1px #fff;">2.87</div><div class="c" style="left:893px;top:547px;width:39px;height:27px;line-height:25px;padding-top:2px;background:#fff;"><span style="color:#1a7f1a">平</span></div><div class="c" style="left:931px;top:547px;width:40px;height:27px;line-height:25px;padding-top:1px;background:#fff;"></div><div class="c" style="left:970px;top:547px;width:59px;height:27px;line-height:25px;padding-top:1px;background:#fff;"></div><div class="c ty" style="left:1px;top:573px;width:82px;height:27px;line-height:25px;padding-top:2px;padding-right:2px;background:#458e0c;border:0;border-left:1px solid #bdbdbd;border-top:1px solid #b8e0a0;border-bottom:1px solid #b8e0a0">西乙</div><div class="c" style="left:82px;top:573px;width:77px;height:27px;line-height:25px;padding-top:1px;background:#efefef;">25-06-22</div><div class="c" style="left:158px;top:573px;width:110px;height:27px;line-height:25px;padding-top:2px;background:#efefef;"><span class="rc">1</span><span style="color:#1a7f1a">奥维多</span></div><div class="c" style="left:267px;top:573px;width:91px;height:27px;line-height:25px;padding-top:1px;background:#efefef;"><span style="color:#d41a1a">2-1</span>(1-1)</div><div class="c" style="left:357px;top:573px;width:39px;height:27px;line-height:25px;padding-top:1px;background:#efefef;">5-3</div><div class="c" style="left:395px;top:573px;width:113px;height:27px;line-height:25px;padding-top:2px;background:#efefef;"><span style="color:#333">米兰德斯</span><span class="rc">1</span></div><div class="c" style="left:507px;top:573px;width:50px;height:27px;line-height:25px;padding-top:1px;background:#fdfaf7;box-shadow:inset 0 0 0 1px #fff;">0.98</div><div class="c" style="left:556px;top:573px;width:86px;height:27px;line-height:25px;padding-top:2px;background:#fdfaf7;box-shadow:inset 0 0 0 1px #fff;">半球</div><div class="c" style="left:641px;top:573px;width:53px;height:27px;line-height:25px;padding-top:1px;background:#fdfaf7;box-shadow:inset 0 0 0 1px #fff;">0.91</div><div class="c" style="left:693px;top:573px;width:67px;height:27px;line-height:25px;padding-top:1px;background:#eff7fa;box-shadow:inset 0 0 0 1px #fff;">1.94</div><div class="c" style="left:759px;top:573px;width:67px;height:27px;line-height:25px;padding-top:1px;background:#eff7fa;box-shadow:inset 0 0 0 1px #fff;">3.15</div><div class="c" style="left:825px;top:573px;width:69px;height:27px;line-height:25px;padding-top:1px;background:#eff7fa;box-shadow:inset 0 0 0 1px #fff;">4.05</div><div class="c" style="left:893px;top:573px;width:39px;height:27px;line-height:25px;padding-top:2px;background:#efefef;"><span style="color:#d41a1a">胜</span></div><div class="c" style="left:931px;top:573px;width:40px;height:27px;line-height:25px;padding-top:2px;background:#efefef;"><span style="color:#d41a1a">赢</span></div><div class="c" style="left:970px;top:573px;width:59px;height:27px;line-height:25px;padding-top:2px;background:#efefef;"><span style="color:#d41a1a">大</span></div><div class="c ty" style="left:1px;top:599px;width:82px;height:27px;line-height:25px;padding-top:2px;padding-right:2px;background:#458e0c;border:0;border-left:1px solid #bdbdbd;border-top:1px solid #b8e0a0;border-bottom:1px solid #b8e0a0">西乙</div><div class="c" style="left:82px;top:599px;width:77px;height:27px;line-height:25px;padding-top:1px;background:#fff;">25-06-16</div><div class="c" style="left:158px;top:599px;width:110px;height:27px;line-height:25px;padding-top:2px;background:#fff;"><span style="color:#333">米兰德斯</span></div><div class="c" style="left:267px;top:599px;width:91px;height:27px;line-height:25px;padding-top:1px;background:#fff;"><span style="color:#d41a1a">1-0</span>(1-0)</div><div class="c" style="left:357px;top:599px;width:39px;height:27px;line-height:25px;padding-top:1px;background:#fff;">4-1</div><div class="c" style="left:395px;top:599px;width:113px;height:27px;line-height:25px;padding-top:2px;background:#fff;"><span style="color:#1a7f1a">奥维多</span></div><div class="c" style="left:507px;top:599px;width:50px;height:27px;line-height:25px;padding-top:1px;background:#fdfaf7;box-shadow:inset 0 0 0 1px #fff;">1.09</div><div class="c" style="left:556px;top:599px;width:86px;height:27px;line-height:25px;padding-top:2px;background:#fdfaf7;box-shadow:inset 0 0 0 1px #fff;">半球</div><div class="c" style="left:641px;top:599px;width:53px;height:27px;line-height:25px;padding-top:1px;background:#fdfaf7;box-shadow:inset 0 0 0 1px #fff;">0.80</div><div class="c" style="left:693px;top:599px;width:67px;height:27px;line-height:25px;padding-top:1px;background:#eff7fa;box-shadow:inset 0 0 0 1px #fff;">2.05</div><div class="c" style="left:759px;top:599px;width:67px;height:27px;line-height:25px;padding-top:1px;background:#eff7fa;box-shadow:inset 0 0 0 1px #fff;">2.84</div><div class="c" style="left:825px;top:599px;width:69px;height:27px;line-height:25px;padding-top:1px;background:#eff7fa;box-shadow:inset 0 0 0 1px #fff;">4.17</div><div class="c" style="left:893px;top:599px;width:39px;height:27px;line-height:25px;padding-top:2px;background:#fff;"><span style="color:#1e1ea6">负</span></div><div class="c" style="left:931px;top:599px;width:40px;height:27px;line-height:25px;padding-top:2px;background:#fff;"><span style="color:#1e1ea6">输</span></div><div class="c" style="left:970px;top:599px;width:59px;height:27px;line-height:25px;padding-top:2px;background:#fff;"><span style="color:#1e1ea6">小</span></div><div class="c ty" style="left:1px;top:625px;width:82px;height:27px;line-height:25px;padding-top:2px;padding-right:2px;background:#458e0c;border:0;border-left:1px solid #bdbdbd;border-top:1px solid #b8e0a0;border-bottom:1px solid #b8e0a0">西乙</div><div class="c" style="left:82px;top:625px;width:77px;height:27px;line-height:25px;padding-top:1px;background:#efefef;">25-06-12</div><div class="c" style="left:158px;top:625px;width:110px;height:27px;line-height:25px;padding-top:2px;background:#efefef;"><span style="color:#1a7f1a">奥维多</span></div><div class="c" style="left:267px;top:625px;width:91px;height:27px;line-height:25px;padding-top:1px;background:#efefef;"><span style="color:#d41a1a">1-1</span>(0-1)</div><div class="c" style="left:357px;top:625px;width:39px;height:27px;line-height:25px;padding-top:1px;background:#efefef;">4-5</div><div class="c" style="left:395px;top:625px;width:113px;height:27px;line-height:25px;padding-top:2px;background:#efefef;"><span style="color:#333">阿尔梅里亚</span></div><div class="c" style="left:507px;top:625px;width:50px;height:27px;line-height:25px;padding-top:1px;background:#fdfaf7;box-shadow:inset 0 0 0 1px #fff;">0.92</div><div class="c" style="left:556px;top:625px;width:86px;height:27px;line-height:25px;padding-top:2px;background:#fdfaf7;box-shadow:inset 0 0 0 1px #fff;">平/半</div><div class="c" style="left:641px;top:625px;width:53px;height:27px;line-height:25px;padding-top:1px;background:#fdfaf7;box-shadow:inset 0 0 0 1px #fff;">0.97</div><div class="c" style="left:693px;top:625px;width:67px;height:27px;line-height:25px;padding-top:1px;background:#eff7fa;box-shadow:inset 0 0 0 1px #fff;">2.19</div><div class="c" style="left:759px;top:625px;width:67px;height:27px;line-height:25px;padding-top:1px;background:#eff7fa;box-shadow:inset 0 0 0 1px #fff;">3.23</div><div class="c" style="left:825px;top:625px;width:69px;height:27px;line-height:25px;padding-top:1px;background:#eff7fa;box-shadow:inset 0 0 0 1px #fff;">3.20</div><div class="c" style="left:893px;top:625px;width:39px;height:27px;line-height:25px;padding-top:2px;background:#efefef;"><span style="color:#1a7f1a">平</span></div><div class="c" style="left:931px;top:625px;width:40px;height:27px;line-height:25px;padding-top:2px;background:#efefef;"><span style="color:#1e1ea6">输</span></div><div class="c" style="left:970px;top:625px;width:59px;height:27px;line-height:25px;padding-top:2px;background:#efefef;"><span style="color:#1e1ea6">小</span></div><div class="c ty" style="left:1px;top:651px;width:82px;height:27px;line-height:25px;padding-top:2px;padding-right:2px;background:#458e0c;border:0;border-left:1px solid #bdbdbd;border-top:1px solid #b8e0a0;border-bottom:1px solid #b8e0a0">西乙</div><div class="c" style="left:82px;top:651px;width:77px;height:27px;line-height:25px;padding-top:1px;background:#fff;">25-06-08</div><div class="c" style="left:158px;top:651px;width:110px;height:27px;line-height:25px;padding-top:2px;background:#fff;"><span style="color:#333">阿尔梅里亚</span></div><div class="c" style="left:267px;top:651px;width:91px;height:27px;line-height:25px;padding-top:1px;background:#fff;"><span style="color:#d41a1a">1-2</span>(1-1)</div><div class="c" style="left:357px;top:651px;width:39px;height:27px;line-height:25px;padding-top:1px;background:#fff;">6-4</div><div class="c" style="left:395px;top:651px;width:113px;height:27px;line-height:25px;padding-top:2px;background:#fff;"><span style="color:#1a7f1a">奥维多</span></div><div class="c" style="left:507px;top:651px;width:50px;height:27px;line-height:25px;padding-top:1px;background:#fdfaf7;box-shadow:inset 0 0 0 1px #fff;">0.98</div><div class="c" style="left:556px;top:651px;width:86px;height:27px;line-height:25px;padding-top:2px;background:#fdfaf7;box-shadow:inset 0 0 0 1px #fff;">平/半</div><div class="c" style="left:641px;top:651px;width:53px;height:27px;line-height:25px;padding-top:1px;background:#fdfaf7;box-shadow:inset 0 0 0 1px #fff;">0.91</div><div class="c" style="left:693px;top:651px;width:67px;height:27px;line-height:25px;padding-top:1px;background:#eff7fa;box-shadow:inset 0 0 0 1px #fff;">2.19</div><div class="c" style="left:759px;top:651px;width:67px;height:27px;line-height:25px;padding-top:1px;background:#eff7fa;box-shadow:inset 0 0 0 1px #fff;">2.99</div><div class="c" style="left:825px;top:651px;width:69px;height:27px;line-height:25px;padding-top:1px;background:#eff7fa;box-shadow:inset 0 0 0 1px #fff;">3.46</div><div class="c" style="left:893px;top:651px;width:39px;height:27px;line-height:25px;padding-top:2px;background:#fff;"><span style="color:#d41a1a">胜</span></div><div class="c" style="left:931px;top:651px;width:40px;height:27px;line-height:25px;padding-top:2px;background:#fff;"><span style="color:#d41a1a">赢</span></div><div class="c" style="left:970px;top:651px;width:59px;height:27px;line-height:25px;padding-top:2px;background:#fff;"><span style="color:#d41a1a">大</span></div><div class="c ty" style="left:1px;top:677px;width:82px;height:27px;line-height:25px;padding-top:2px;padding-right:2px;background:#458e0c;border:0;border-left:1px solid #bdbdbd;border-top:1px solid #b8e0a0;border-bottom:1px solid #b8e0a0">西乙</div><div class="c" style="left:82px;top:677px;width:77px;height:27px;line-height:25px;padding-top:1px;background:#efefef;">25-06-02</div><div class="c" style="left:158px;top:677px;width:110px;height:27px;line-height:25px;padding-top:2px;background:#efefef;"><span style="color:#1a7f1a">奥维多</span></div><div class="c" style="left:267px;top:677px;width:91px;height:27px;line-height:25px;padding-top:1px;background:#efefef;"><span style="color:#d41a1a">2-1</span>(2-1)</div><div class="c" style="left:357px;top:677px;width:39px;height:27px;line-height:25px;padding-top:1px;background:#efefef;">8-3</div><div class="c" style="left:395px;top:677px;width:113px;height:27px;line-height:25px;padding-top:2px;background:#efefef;"><span style="color:#333">加的斯</span></div><div class="c" style="left:507px;top:677px;width:50px;height:27px;line-height:25px;padding-top:1px;background:#fdfaf7;box-shadow:inset 0 0 0 1px #fff;">1.05</div><div class="c" style="left:556px;top:677px;width:86px;height:27px;line-height:25px;padding-top:2px;background:#fdfaf7;box-shadow:inset 0 0 0 1px #fff;">一/球半</div><div class="c" style="left:641px;top:677px;width:53px;height:27px;line-height:25px;padding-top:1px;background:#fdfaf7;box-shadow:inset 0 0 0 1px #fff;">0.84</div><div class="c" style="left:693px;top:677px;width:67px;height:27px;line-height:25px;padding-top:1px;background:#eff7fa;box-shadow:inset 0 0 0 1px #fff;">1.39</div><div class="c" style="left:759px;top:677px;width:67px;height:27px;line-height:25px;padding-top:1px;background:#eff7fa;box-shadow:inset 0 0 0 1px #fff;">4.26</div><div class="c" style="left:825px;top:677px;width:69px;height:27px;line-height:25px;padding-top:1px;background:#eff7fa;box-shadow:inset 0 0 0 1px #fff;">8.13</div><div class="c" style="left:893px;top:677px;width:39px;height:27px;line-height:25px;padding-top:2px;background:#efefef;"><span style="color:#d41a1a">胜</span></div><div class="c" style="left:931px;top:677px;width:40px;height:27px;line-height:25px;padding-top:2px;background:#efefef;"><span style="color:#1e1ea6">输</span></div><div class="c" style="left:970px;top:677px;width:59px;height:27px;line-height:25px;padding-top:2px;background:#efefef;"><span style="color:#d41a1a">大</span></div><div class="c" style="left:1px;top:703px;width:1028px;height:27px;line-height:25px;padding-top:2px;background:#fff;letter-spacing:0.24px">近<span style="color:#d41a1a">10</span>场,胜4平4负2, 胜率:<span style="color:#d41a1a">40%</span> 让胜率:<span style="color:#d41a1a">57.1%</span> 大率:<span style="color:#d41a1a">42.9%</span> 单率:<span style="color:#d41a1a">60%</span></div>
</body></html>
